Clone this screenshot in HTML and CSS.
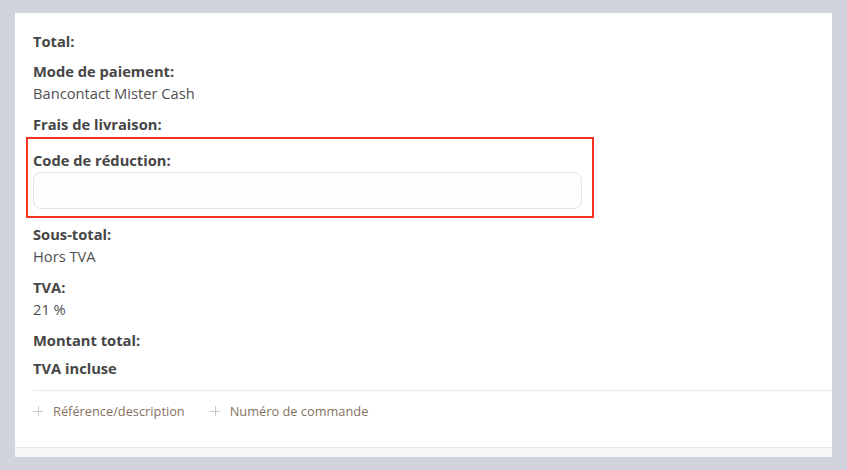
FILE: index.html
```html
<html>
<head>
    <title>Récapitulatif</title>
    <link rel="stylesheet" href="styles.css">
</head>
<body>

<div id="order_panel">

    <div id="order_summary">

        <div class="field spaced-sm">
            <div class="label">Total:</div>
        </div>

        <div class="field">
            <div class="label">Mode de paiement:</div>
            <div class="value">Bancontact Mister Cash</div>
        </div>

        <div class="field before-highlight">
            <div class="label">Frais de livraison:</div>
        </div>

        <div class="field highlight">
            <div class="label">Code de réduction:</div>
            <input class="text-input" type="text">
        </div>

        <div class="field">
            <div class="label">Sous-total:</div>
            <div class="value">Hors TVA</div>
        </div>

        <div class="field">
            <div class="label">TVA:</div>
            <div class="value">21 %</div>
        </div>

        <div class="field last">
            <div class="label">Montant total:</div>
            <div class="label note">TVA incluse</div>
        </div>

    </div>

    <div id="order_links">
        <a class="add-link" href="#"><span class="plus"></span>Référence/description</a>
        <a class="add-link" href="#"><span class="plus"></span>Numéro de commande</a>
    </div>

    <div id="order_bottom"></div>

</div>

</body>
</html>
```

FILE: styles.css
```css
html, body {
    margin: 0px;
    padding: 0px;
    background: #d1d4dc;
}

body {
    font-family: "Open Sans", "Liberation Sans", sans-serif;
    font-size: 14.7px;
    line-height: 20px;
    color: #505050;
}

#order_panel {
    margin: 13px 15px 0px 15px;
    background: #ffffff;
}

#order_summary {
    padding: 18px 0px 0px 18px;
}

#order_summary .field {
    margin-bottom: 11px;
}

#order_summary .field.spaced-sm {
    margin-bottom: 10px;
}

#order_summary .field.before-highlight {
    margin-bottom: 3px;
}

#order_summary .field.last {
    margin-bottom: 0px;
}

.label {
    font-weight: 700;
    color: #464646;
}

.value {
    margin-top: 2px;
    color: #505050;
}

.label.note {
    margin-top: 8px;
}

/* the red frame round the discount code */
#order_summary .field.highlight {
    width: 549px;
    margin: 0px 0px 6px -7px;
    padding: 11px 10px 7px 5px;
    border: 2px solid #f3321f;
}

.text-input {
    display: block;
    box-sizing: border-box;
    width: 549px;
    height: 37px;
    margin-top: 2px;
    border: 1px solid #e6e2de;
    border-radius: 8px;
    background: #fefefe;
    outline: none;
}

#order_links {
    margin-left: 18px;
    margin-top: 12px;
    border-top: 1px solid #ece9e6;
    padding: 10px 0px 0px 0px;
    height: 46px;
    display: flex;
    gap: 25px;
}

.add-link {
    display: flex;
    align-items: center;
    height: 20px;
    font-size: 12.8px;
    color: #84725f;
    text-decoration: none;
}

.plus {
    position: relative;
    width: 10px;
    height: 10px;
    margin-right: 10px;
}

.plus::before, .plus::after {
    content: "";
    position: absolute;
    background: #cfc8c2;
}

.plus::before {
    left: 0px;
    top: 5px;
    width: 10px;
    height: 1px;
}

.plus::after {
    left: 5px;
    top: 0px;
    width: 1px;
    height: 10px;
}

#order_bottom {
    height: 9px;
    border-top: 1px solid #ebe8e5;
    background: #f6f6f6;
}
```
